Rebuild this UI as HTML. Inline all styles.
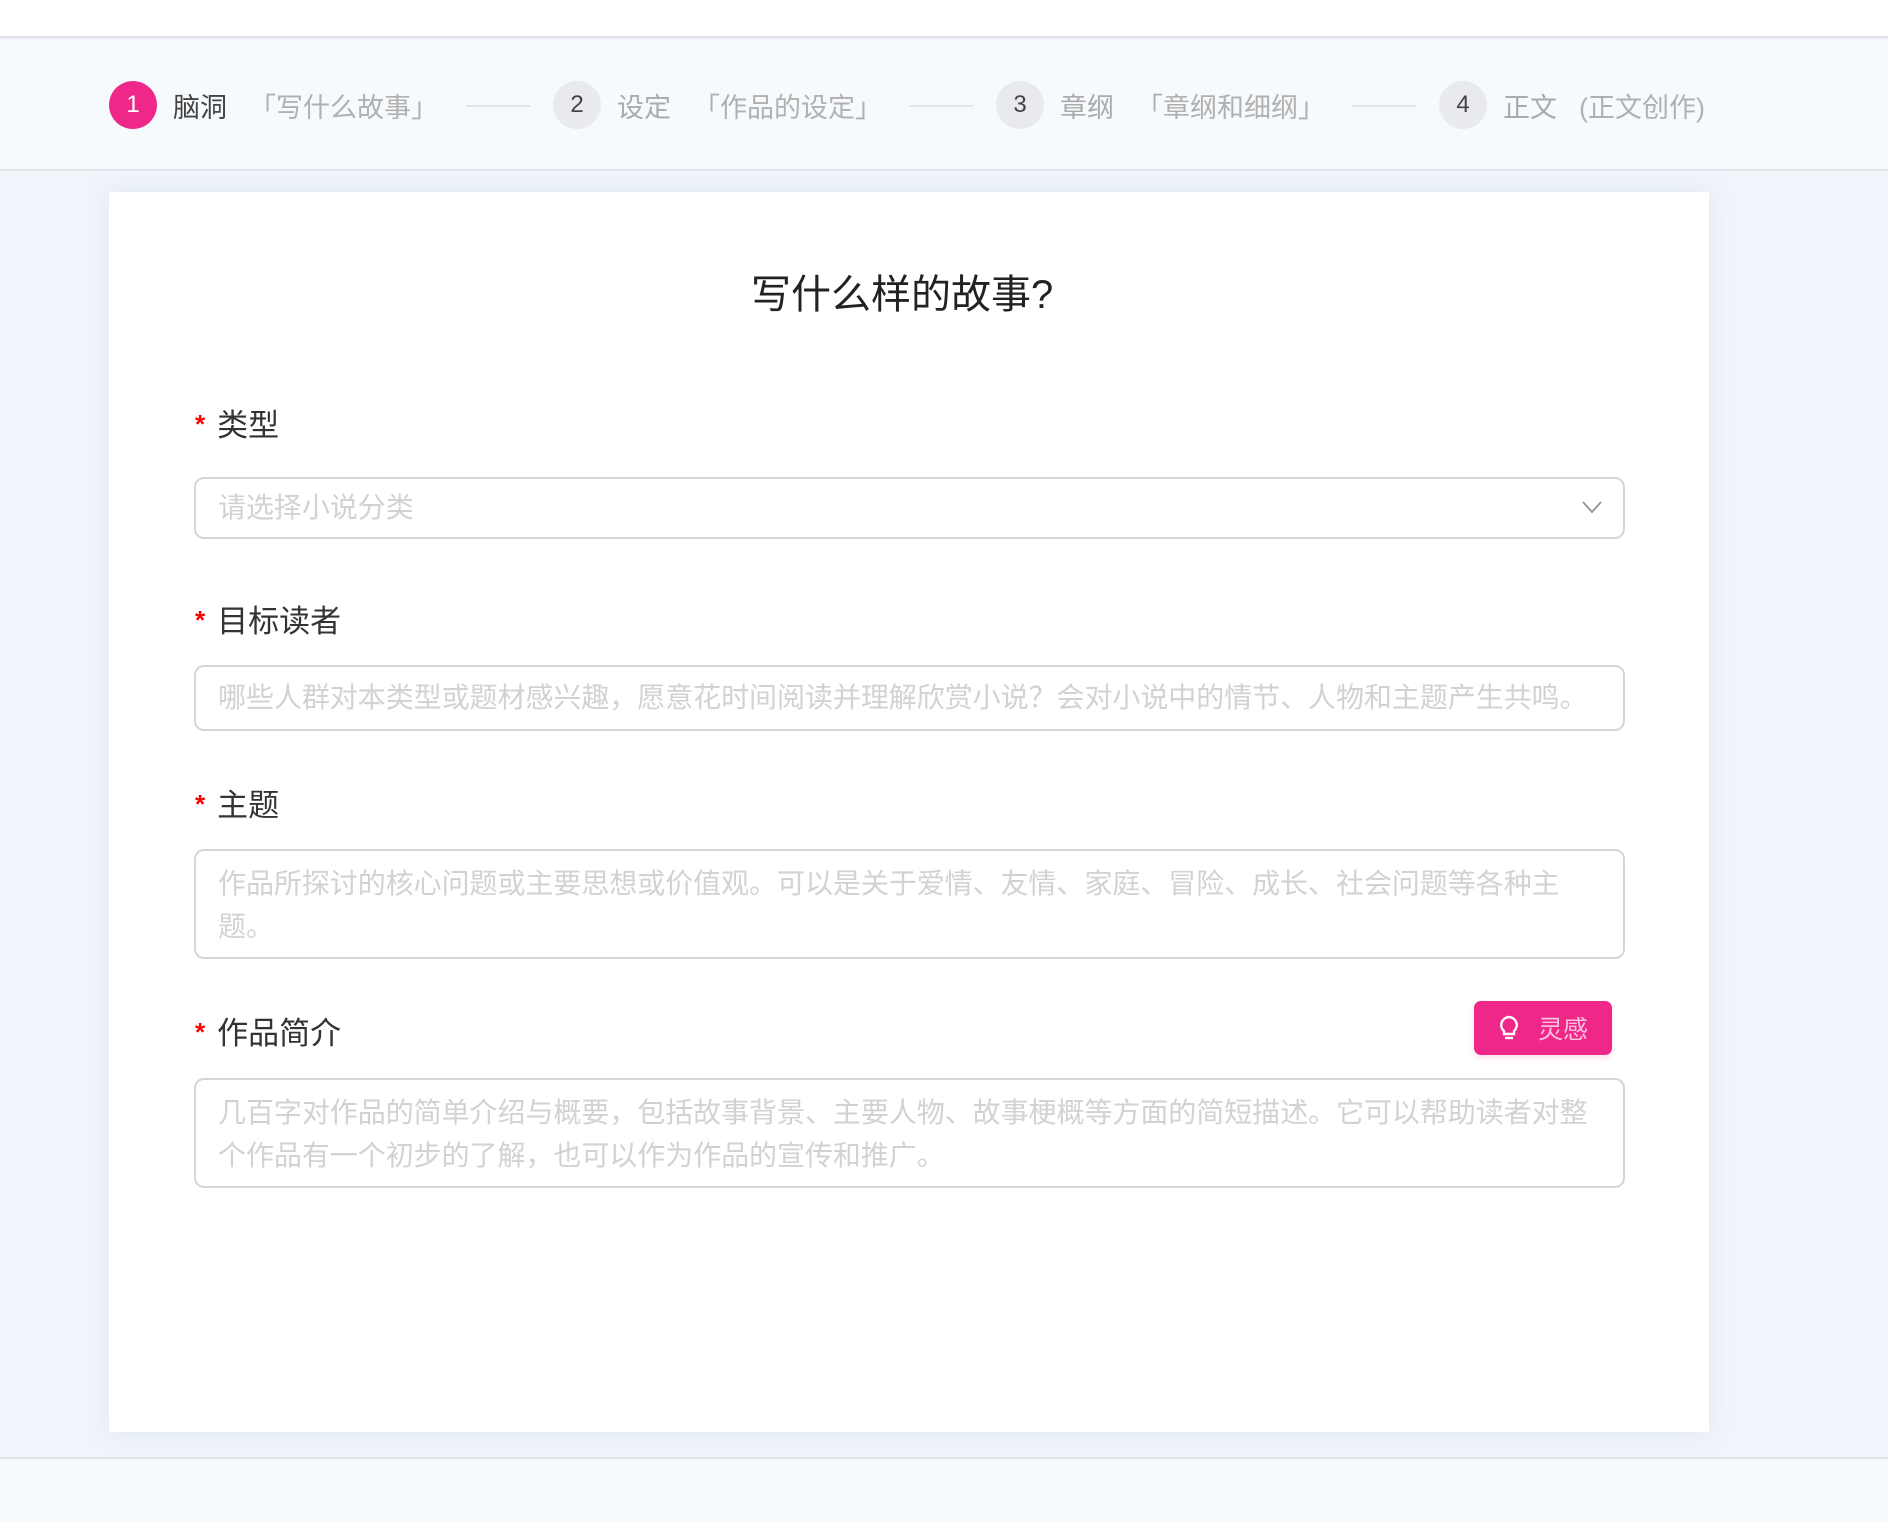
<!DOCTYPE html>
<html><head><meta charset="utf-8">
<style>
*{margin:0;padding:0;box-sizing:border-box}
body{width:1888px;height:1522px;background:#f0f4fb;font-family:"Liberation Sans","Noto Sans CJK SC",sans-serif;position:relative;overflow:hidden}
.top{position:absolute;left:0;top:0;width:1888px;height:38px;background:#fff;border-bottom:2px solid #e0e2e6}
.hdr{position:absolute;left:0;top:40px;width:1888px;height:131px;background:#f7fafd;border-bottom:2px solid #e0e2e6}
.step{position:absolute;top:81px;height:48px;display:flex;align-items:center;white-space:nowrap}
.c{width:48px;height:48px;border-radius:50%;background:#e8eaee;color:#444;font-size:24px;display:flex;align-items:center;justify-content:center;margin-right:16px}
.c.on{background:#ee2789;color:#fff}
.t{font-size:27px;color:#aaa}
.t.on{color:#444}
.s{font-size:27px;color:#b0b0b0;margin-left:22px}
.ln{position:absolute;top:105px;height:2px;width:64px;background:#e2e4e8}
.card{position:absolute;left:109px;top:192px;width:1600px;height:1240px;background:#fff;box-shadow:0 0 20px rgba(200,210,230,.4)}
h1{position:absolute;left:751px;top:262px;font-size:40px;font-weight:normal;color:#222;white-space:nowrap}
.lab{position:absolute;left:195px;font-size:31px;color:#333}
.lab b{color:#f00;font-weight:bold;font-size:26px;margin-right:12px;position:relative;top:-3px}
.box{position:absolute;left:194px;width:1431px;border:2px solid #d6d6d6;border-radius:10px;background:#fff;padding:0 22px;font-size:28px;letter-spacing:-.05px;color:#d2d2d2;line-height:43px}
.foot{position:absolute;left:0;top:1457px;width:1888px;height:65px;background:#f7fafd;border-top:2px solid #e0e2e6}
.btn{position:absolute;left:1474px;top:1001px;width:138px;height:54px;background:#ee2789;border-radius:7px;color:#fbc0dd;font-size:25px;display:flex;align-items:center;justify-content:center;box-shadow:0 3px 6px rgba(238,39,137,.15)}
</style></head><body>
<div class="top"></div>
<div class="hdr"></div>
<div class="step" style="left:109px"><div class="c on">1</div><span class="t on">脑洞</span><span class="s">「写什么故事」</span></div>
<div class="ln" style="left:466px"></div>
<div class="step" style="left:553px"><div class="c">2</div><span class="t">设定</span><span class="s">「作品的设定」</span></div>
<div class="ln" style="left:909px"></div>
<div class="step" style="left:996px"><div class="c">3</div><span class="t">章纲</span><span class="s">「章纲和细纲」</span></div>
<div class="ln" style="left:1352px"></div>
<div class="step" style="left:1439px"><div class="c">4</div><span class="t">正文</span><span class="s">(正文创作)</span></div>

<div class="card"></div>
<h1>写什么样的故事?</h1>

<div class="lab" style="top:400px"><b>*</b>类型</div>
<div class="box" style="top:477px;height:62px;line-height:58px">请选择小说分类
<svg style="position:absolute;right:20px;top:20px" width="22" height="16" viewBox="0 0 22 16"><path d="M2 3 L11 13 L20 3" fill="none" stroke="#999" stroke-width="2"/></svg></div>

<div class="lab" style="top:596px"><b>*</b>目标读者</div>
<div class="box" style="top:665px;height:66px;line-height:62px;white-space:nowrap">哪些人群对本类型或题材感兴趣，愿意花时间阅读并理解欣赏小说？会对小说中的情节、人物和主题产生共鸣。</div>

<div class="lab" style="top:780px"><b>*</b>主题</div>
<div class="box" style="top:849px;height:110px;padding-top:11px">作品所探讨的核心问题或主要思想或价值观。可以是关于爱情、友情、家庭、冒险、成长、社会问题等各种主<br>题。</div>

<div class="lab" style="top:1008px"><b>*</b>作品简介</div>
<div class="btn"><svg width="22" height="26" viewBox="0 0 22 26" style="margin-right:18px"><path d="M11 2a8 8 0 0 0-5 14v3h10v-3a8 8 0 0 0-5-14z" fill="none" stroke="#fff" stroke-width="2.4"/><path d="M7 23h8" stroke="#fff" stroke-width="2.4"/></svg>灵感</div>
<div class="box" style="top:1078px;height:110px;padding-top:11px">几百字对作品的简单介绍与概要，包括故事背景、主要人物、故事梗概等方面的简短描述。它可以帮助读者对整<br>个作品有一个初步的了解，也可以作为作品的宣传和推广。</div>

<div class="foot"></div>
</body></html>
